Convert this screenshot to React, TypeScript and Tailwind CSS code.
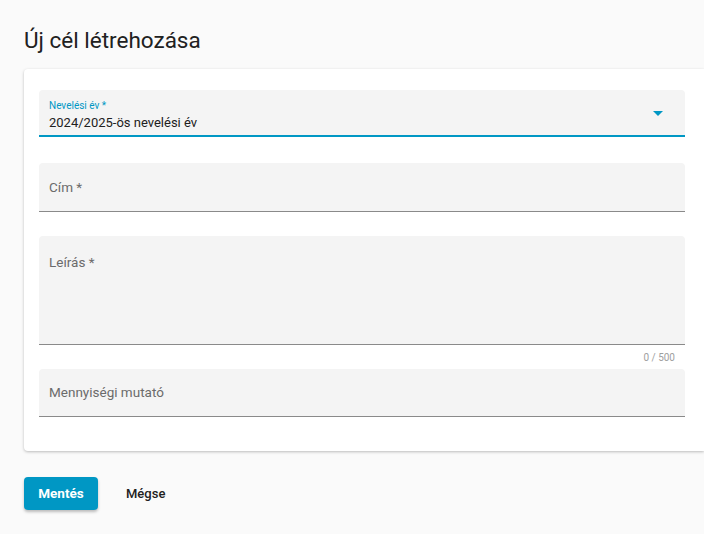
export default function App() {
  return (
    <div className="min-h-[534px] bg-[#fafafa] font-['Roboto',sans-serif] overflow-hidden">
      <h1 className="pl-6 pt-[26px] text-[22.5px] leading-[28px] text-[#212121] font-normal">
        Új cél létrehozása
      </h1>
      <div className="ml-6 mt-[15px] bg-white rounded-l-[4px] shadow-[0_1px_3px_rgba(0,0,0,0.25)] pl-[15px] pr-[19px] pt-[21px] pb-[34px]">
        <div className="relative h-[47px] bg-[#f4f4f4] rounded-t-[4px] border-b-2 border-[#0097c4] px-[10px]">
          <div className="pt-[10px] text-[10px] leading-[12px] text-[#0097c4]">
            Nevelési év *
          </div>
          <div className="mt-[2px] text-[13px] leading-[18px] text-[#212121]">
            2024/2025-ös nevelési év
          </div>
          <div className="absolute right-[22px] top-[21px] w-0 h-0 border-l-[5px] border-r-[5px] border-t-[5px] border-l-transparent border-r-transparent border-t-[#0097c4]" />
        </div>

        <div className="mt-[26px] h-[49px] bg-[#f4f4f4] rounded-t-[4px] border-b border-[#8a8a8a] px-[10px] flex items-center">
          <span className="text-[13.5px] text-[#6b6b6b]">Cím *</span>
        </div>

        <div className="mt-[24px] h-[109px] bg-[#f4f4f4] rounded-t-[4px] border-b border-[#8a8a8a] px-[10px] pt-[14px]">
          <span className="text-[13.5px] text-[#6b6b6b]">Leírás *</span>
        </div>
        <div className="h-[24px] pr-[10px] flex items-center justify-end text-[10px] text-[#9e9e9e]">
          0 / 500
        </div>

        <div className="h-[48px] bg-[#f4f4f4] rounded-t-[4px] border-b border-[#8a8a8a] px-[10px] flex items-center">
          <span className="text-[13.5px] text-[#6b6b6b]">Mennyiségi mutató</span>
        </div>
      </div>

      <div className="pl-6 mt-[26px] flex items-center gap-[28px]">
        <button className="w-[74px] h-[33px] bg-[#0097c4] text-white text-[13.5px] font-bold rounded-[4px] shadow-[0_2px_3px_rgba(0,0,0,0.25)]">
          Mentés
        </button>
        <button className="text-[13px] font-medium text-[#212121]">Mégse</button>
      </div>
    </div>
  );
}
